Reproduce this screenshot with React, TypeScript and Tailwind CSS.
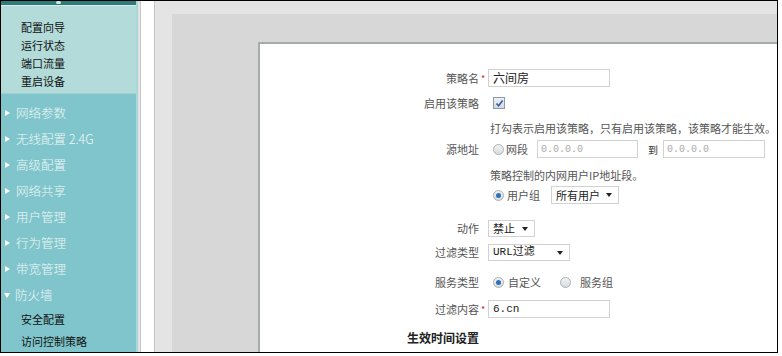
import React from 'react';

const FONT = "font-['Noto_Sans_CJK_SC','Liberation_Sans',sans-serif]";
const MONO = "font-['Liberation_Mono','Noto_Sans_CJK_SC',monospace]";

const TOP_MENU = ['配置向导', '运行状态', '端口流量', '重启设备'];
const MAIN_MENU = ['网络参数', '无线配置 2.4G', '高级配置', '网络共享', '用户管理', '行为管理', '带宽管理'];

function Radio({ checked }: { checked?: boolean }) {
  return (
    <span className="flex h-[11px] w-[11px] items-center justify-center rounded-full border border-[#a9b1b8] bg-gradient-to-b from-[#f2f2f2] to-[#d9dcdf]">
      {checked && <span className="h-[5px] w-[5px] rounded-full bg-[#2f6fb8]" />}
    </span>
  );
}

function Checkbox() {
  return (
    <span className="flex h-[12px] w-[12px] items-center justify-center border border-[#8e9aa6] bg-gradient-to-b from-[#eef0f3] to-[#d5d9de]">
      <svg width="9" height="9" viewBox="0 0 9 9">
        <path d="M1.5 4.5 L3.6 6.8 L7.6 1.6" fill="none" stroke="#2d5fa8" strokeWidth="1.6" />
      </svg>
    </span>
  );
}

function Caret() {
  return <span className="h-0 w-0 border-x-[3.5px] border-t-[4px] border-x-transparent border-t-[#222]" />;
}

function Select({ text, width, mono }: { text: string; width: string; mono?: boolean }) {
  return (
    <div className={`flex h-full items-center justify-between border border-[#d2d2d2] bg-white pl-[4px] pr-[6px] text-[11px] text-[#222] ${width}`}>
      <span className={mono ? MONO : ''}>{text}</span>
      <Caret />
    </div>
  );
}

function Row({
  label,
  required,
  bold,
  className,
  children,
}: {
  label?: string;
  required?: boolean;
  bold?: boolean;
  className: string;
  children?: React.ReactNode;
}) {
  return (
    <div className={`flex items-center ${className}`}>
      <div className="flex w-[228px] shrink-0 items-center justify-end">
        <span className={bold ? 'text-[12px] font-bold text-[#222]' : 'text-[11px] text-[#555]'}>{label}</span>
        <span className="w-[9px] pl-[2px] text-[9px] leading-none text-[#e02020]">{required ? '*' : ''}</span>
      </div>
      <div className="flex h-full items-center">{children}</div>
    </div>
  );
}

export default function App() {
  return (
    <div className={`h-[356px] w-[782px] bg-white ${FONT}`}>
      <div className="flex h-[353px] w-[778px] overflow-hidden border border-black">
        {/* Sidebar */}
        <div className="flex w-[135px] shrink-0 flex-col bg-[#80c5cb]">
          <div className="flex h-[4px] items-center bg-[#2e7b7a] pl-[55px]">
            <span className="h-[3px] w-[5px] rounded-full bg-white/80" />
          </div>
          <div className="h-[1px] bg-[#d4ecec]" />
          <div className="flex h-[91px] flex-col border-b border-[#9fcfd0] bg-[#b3dbd9] pt-[12px]">
            {TOP_MENU.map((item) => (
              <div key={item} className="flex h-[18px] items-center pl-[20px] text-[11px] text-[#111]">
                {item}
              </div>
            ))}
          </div>
          <div className="flex flex-col pt-[6px]">
            {MAIN_MENU.map((item) => (
              <div key={item} className="flex h-[26px] items-center pl-[4px] text-[12.5px] font-light text-[#eef8f8]">
                <span className="mr-[6px] h-0 w-0 border-y-[3px] border-l-[5px] border-y-transparent border-l-white" />
                {item}
              </div>
            ))}
            <div className="flex h-[26px] items-center pl-[3px] text-[12.5px] font-light text-[#eef8f8]">
              <span className="mr-[5px] h-0 w-0 border-x-[3px] border-t-[5px] border-x-transparent border-t-white" />
              防火墙
            </div>
            <div className="flex h-[22px] items-center pl-[20px] text-[11px] text-[#111]">安全配置</div>
            <div className="flex h-[22px] items-center pl-[20px] text-[11px] text-[#111]">访问控制策略</div>
          </div>
        </div>
        <div className="w-[2px] shrink-0 bg-[#a8d7d8]" />
        <div className="w-[2px] shrink-0 bg-[#e2e2e2]" />
        <div className="w-[1px] shrink-0 bg-[#c6c6c6]" />
        <div className="w-[13px] shrink-0 bg-white" />
        <div className="w-[1px] shrink-0 bg-[#c4c4c4]" />

        {/* Main area */}
        <div className="flex flex-1 flex-col bg-[#e4e4e4] pl-[17px] pt-[13px]">
          <div className="flex flex-1 flex-col bg-[#d7d7d7] pl-[86px] pt-[28px]">
            <div className="flex-1 border-l-2 border-t-2 border-[#a3acac] bg-white pt-[22px]">
              <Row label="策略名" required className="h-[24px]">
                <div className="flex h-[18px] w-[122px] items-center border border-[#d2d2d2] pl-[4px] text-[12px] text-[#222]">
                  六间房
                </div>
              </Row>
              <Row label="启用该策略" className="h-[26px]">
                <span className="ml-[5px]">
                  <Checkbox />
                </span>
              </Row>
              <Row className="h-[24px]">
                <span className="pl-[2px] text-[11px] text-[#555]">打勾表示启用该策略，只有启用该策略，该策略才能生效。</span>
              </Row>
              <Row label="源地址" className="h-[18px]">
                <span className="ml-[5px]">
                  <Radio />
                </span>
                <span className="ml-[2px] text-[11px] text-[#555]">网段</span>
                <div className={`ml-[9px] flex h-[18px] w-[101px] items-center border border-[#d2d2d2] pl-[3px] text-[10px] text-[#aaa] ${MONO}`}>
                  0.0.0.0
                </div>
                <span className="ml-[10px] text-[10px] text-[#333]">到</span>
                <div className={`ml-[5px] flex h-[18px] w-[102px] items-center border border-[#d2d2d2] pl-[3px] text-[10px] text-[#aaa] ${MONO}`}>
                  0.0.0.0
                </div>
              </Row>
              <Row className="mt-[7px] h-[20px]">
                <span className="pl-[2px] text-[11px] text-[#555]">策略控制的内网用户IP地址段。</span>
              </Row>
              <Row className="mt-[1px] h-[18px]">
                <span className="ml-[5px]">
                  <Radio checked />
                </span>
                <span className="ml-[3px] text-[11px] text-[#555]">用户组</span>
                <div className="ml-[11px] h-[18px]">
                  <Select text="所有用户" width="w-[68px]" />
                </div>
              </Row>
              <Row label="动作" className="mt-[16px] h-[17px]">
                <Select text="禁止" width="w-[47px]" />
              </Row>
              <Row label="过滤类型" className="mt-[7px] h-[17px]">
                <Select text="URL过滤" width="w-[82px]" mono />
              </Row>
              <Row label="服务类型" className="mt-[11px] h-[20px]">
                <span className="ml-[5px]">
                  <Radio checked />
                </span>
                <span className="ml-[4px] text-[11px] text-[#555]">自定义</span>
                <span className="ml-[19px]">
                  <Radio />
                </span>
                <span className="ml-[9px] text-[11px] text-[#555]">服务组</span>
              </Row>
              <Row label="过滤内容" required className="mt-[8px] h-[18px]">
                <div className={`flex h-[18px] w-[122px] items-center border border-[#d2d2d2] pl-[4px] text-[11px] text-[#222] ${MONO}`}>
                  6.cn
                </div>
              </Row>
              <Row label="生效时间设置" bold className="mt-[10px] h-[20px]" />
            </div>
          </div>
        </div>
      </div>
    </div>
  );
}
